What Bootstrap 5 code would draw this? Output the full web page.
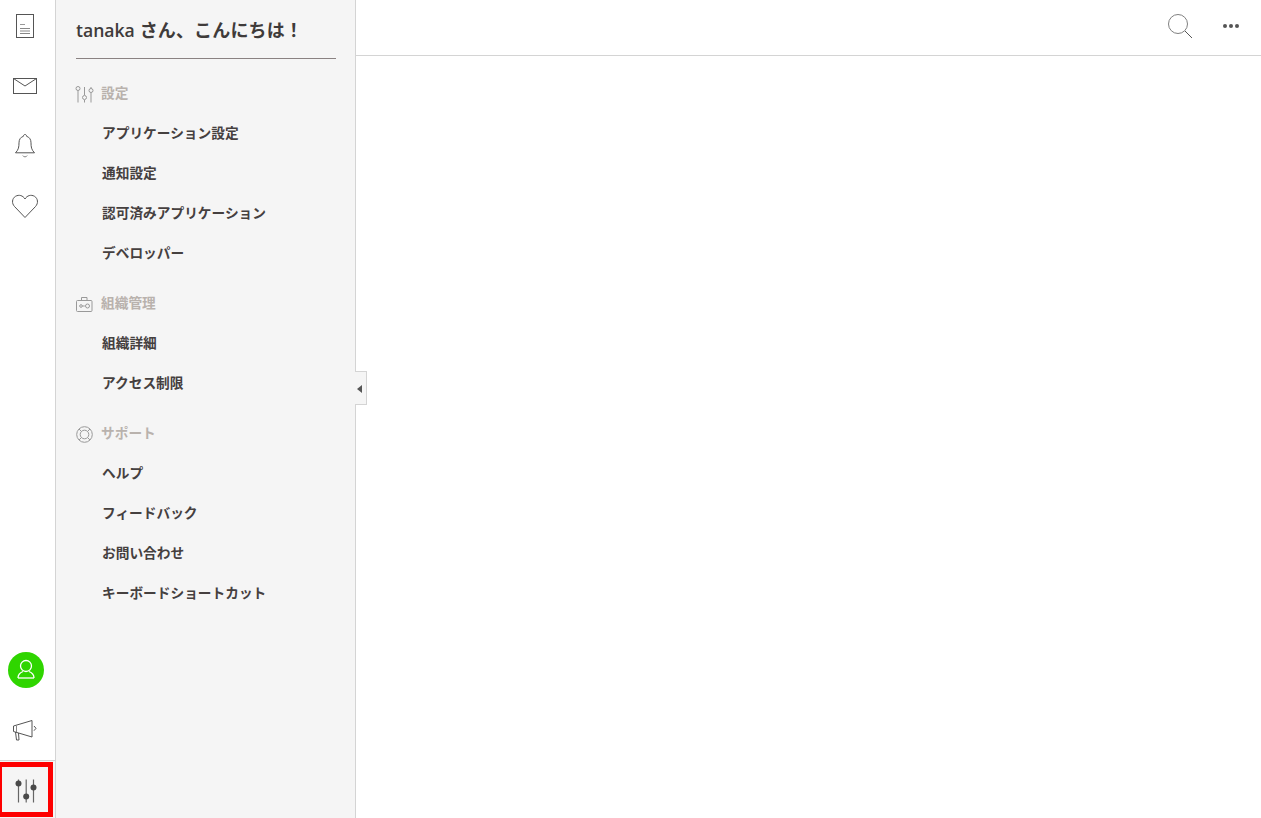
<!doctype html>
<html lang="ja">
<head>
<meta charset="utf-8">
<title>設定</title>
<link href="https://cdn.jsdelivr.net/npm/bootstrap@5.3.0/dist/css/bootstrap.min.css" rel="stylesheet">
<style>
html,body{height:100%;overflow:hidden}
body{font-family:"Open Sans","Noto Sans CJK JP",sans-serif;color:#3f3b3a;background:#fff}
.app-shell{height:818px}
.rail{width:56px;border-right:1px solid #d4d4d4;background:#fff}
.rail-btn{height:60px;width:50px}
.rail-top{margin-top:-4px}
.rail-bottom-item{height:60px;width:52px}
.rail-bottom-item.horn{width:50px;padding-top:2px}
.avatar-disc{width:36px;height:36px;background:#2fd500;border-radius:50%;margin-top:2px}
.settings-cell{height:58px;width:55px;background:#f5f5f5;border-top:1px solid #d4d4d4;margin-top:1px;position:relative}
.settings-mark{position:absolute;left:0;top:1px;width:53px;height:55px;border:5px solid #fe0000;border-left-width:2px;padding-left:2px}
.panel{width:300px;background:#f5f5f5;border-right:1px solid #d4d4d4;position:relative}
.greet{margin:0 19px 0 20px;height:59px;border-bottom:1px solid #8a8282;font-size:18px;font-weight:700;line-height:60px;color:#3f3b3a;letter-spacing:.15px}
.greet-name{font-size:17.6px;font-weight:600;letter-spacing:0}
.sec-head{height:40px;margin-left:19px;font-size:13.7px;font-weight:700;color:#b9b2ad;gap:7px;padding-bottom:2px}
.sec-icon{width:19px;height:19px;flex:none;margin-top:2px}
.menu-link{display:block;height:40px;line-height:38px;padding-left:46px;font-size:13.7px;font-weight:700;color:#45403f;text-decoration:none}
.sec-first{margin-top:15px}
.sec-next{margin-top:10px}
.collapse-tab{position:absolute;right:-12px;top:371px;width:12px;height:34px;background:#f5f5f5;border:1px solid #d4d4d4;border-left:0}
.collapse-tab::after{content:"";position:absolute;left:2px;top:13px;border-style:solid;border-width:4px 5px 4px 0;border-color:transparent #555 transparent transparent}
.topbar{height:56px;border-bottom:1px solid #d4d4d4;padding-right:22px}
.search-glyph{margin-right:30px;margin-top:-3px}
.dots{gap:2px;margin-top:-3px}
.dots span{width:4px;height:4px;background:#555;border-radius:50%}
</style>
</head>
<body>
<div class="app-shell d-flex">
  <nav class="rail d-flex flex-column flex-shrink-0">
    <div class="rail-top">
      <div class="rail-btn d-flex align-items-center justify-content-center">
        <svg width="20" height="26" viewBox="0 0 20 26" fill="none" stroke="#555"><rect x="1.500" y="1.500" width="17" height="23"/><path d="M5 11.500h5" stroke="#999"/><path d="M5 15.500h10M5 18h10M5 20.500h10" stroke="#888"/></svg>
      </div>
      <div class="rail-btn d-flex align-items-center justify-content-center">
        <svg width="26" height="18" viewBox="0 0 26 18" fill="none" stroke="#555"><rect x="1.500" y="1.500" width="23" height="15"/><path d="M1.500 1.500 13 9 24.500 1.500"/></svg>
      </div>
      <div class="rail-btn d-flex align-items-center justify-content-center">
        <svg width="22" height="26" viewBox="0 0 22 26" fill="none" stroke="#555"><path d="M11 1.500c-1 0-1.600.8-1.600 1.800-3 .9-4.400 3.400-4.400 6.500 0 4-.4 7-3.500 10h19c-3.100-3-3.500-6-3.500-10 0-3.100-1.400-5.600-4.400-6.500 0-1-.6-1.800-1.600-1.800z"/><path d="M8.800 22.500c.5 1.800 3.900 1.800 4.400 0" stroke="#888"/></svg>
      </div>
      <div class="rail-btn d-flex align-items-center justify-content-center">
        <svg width="28" height="26" viewBox="0 0 28 26" fill="none" stroke="#555"><path d="M14 24.500 3.500 13.500C.5 10.300 1 5.500 4.500 3.300 8 1.300 12 2.500 14 6c2-3.500 6-4.700 9.500-2.700 3.500 2.200 4 7 1 10.200z"/></svg>
      </div>
    </div>
    <div class="mt-auto">
      <div class="rail-bottom-item d-flex align-items-center justify-content-center">
        <div class="avatar-disc d-flex align-items-center justify-content-center">
          <svg width="22" height="24" viewBox="0 0 22 24" fill="none" stroke="#fff" stroke-width="1.300"><circle cx="11" cy="8" r="5.500"/><path d="M3 20c0-3.500 2.500-5.500 5-6.500M19 20c0-3.500-2.500-5.500-5-6.500"/><path d="M3 20h16"/></svg>
        </div>
      </div>
      <div class="rail-bottom-item horn d-flex align-items-center justify-content-center">
        <svg width="26" height="24" viewBox="0 0 26 24" fill="none" stroke="#555"><path d="M1.500 8 20 2.500V19L1.500 13.500z"/><path d="M3.500 14l1 8H7l-.5-7"/><path d="M22 8l2 2.300-2 2.400"/><path d="M4.500 7.500v6.500" stroke="#888"/></svg>
      </div>
      <div class="settings-cell">
        <div class="settings-mark d-flex align-items-center justify-content-center">
          <svg width="24" height="26" viewBox="0 0 24 26" fill="none" stroke="#666" stroke-width="1.200"><path d="M4.500 2.500v23M12.200 2.500v23M19.500 2.500v23"/><circle cx="4.500" cy="6.500" r="3" fill="#4a4a4a" stroke="none"/><circle cx="12.200" cy="19.500" r="3" fill="#4a4a4a" stroke="none"/><circle cx="19.500" cy="10.500" r="3" fill="#4a4a4a" stroke="none"/></svg>
        </div>
      </div>
    </div>
  </nav>
  <aside class="panel flex-shrink-0">
    <div class="greet"><span class="greet-name">tanaka</span> さん、こんにちは！</div>
    <div class="sec-head sec-first d-flex align-items-center">
      <svg class="sec-icon" viewBox="0 0 19 19" fill="none" stroke="#999"><path d="M3 5.500V17.500M9.500 2v8M9.500 15v2.500M16 2v1.500M16 7.500v10"/><circle cx="3" cy="3.500" r="2"/><circle cx="9.500" cy="12.500" r="2"/><circle cx="16" cy="5.500" r="2"/></svg>
      <span>設定</span>
    </div>
    <a class="menu-link" href="#">アプリケーション設定</a>
    <a class="menu-link" href="#">通知設定</a>
    <a class="menu-link" href="#">認可済みアプリケーション</a>
    <a class="menu-link" href="#">デベロッパー</a>
    <div class="sec-head sec-next d-flex align-items-center">
      <svg class="sec-icon" viewBox="0 0 19 19" fill="none" stroke="#999"><rect x="1.500" y="5.500" width="15.500" height="11" rx="1"/><path d="M6.500 5.500V2.500h5.500v3"/><circle cx="6" cy="11" r="1.300"/><path d="M7.300 11h2.500"/><circle cx="12.500" cy="11" r="2"/></svg>
      <span>組織管理</span>
    </div>
    <a class="menu-link" href="#">組織詳細</a>
    <a class="menu-link" href="#">アクセス制限</a>
    <div class="sec-head sec-next d-flex align-items-center">
      <svg class="sec-icon" viewBox="0 0 19 19" fill="none" stroke="#999"><circle cx="9.500" cy="9.500" r="7.800"/><circle cx="9.500" cy="9.500" r="4.300"/><path d="M4 4 6.500 6.500M15 4 12.500 6.500M4 15 6.500 12.500M15 15 12.500 12.500"/></svg>
      <span>サポート</span>
    </div>
    <a class="menu-link" href="#">ヘルプ</a>
    <a class="menu-link" href="#">フィードバック</a>
    <a class="menu-link" href="#">お問い合わせ</a>
    <a class="menu-link" href="#">キーボードショートカット</a>
    <div class="collapse-tab"></div>
  </aside>
  <main class="flex-grow-1">
    <header class="topbar d-flex align-items-center justify-content-end">
      <svg class="search-glyph" width="26" height="26" viewBox="0 0 26 26" fill="none"><circle cx="11" cy="11" r="9.500" stroke="#808080"/><path d="M18 18l7 7" stroke="#555"/></svg>
      <div class="dots d-flex"><span></span><span></span><span></span></div>
    </header>
  </main>
</div>
<script src="https://cdn.jsdelivr.net/npm/bootstrap@5.3.0/dist/js/bootstrap.bundle.min.js"></script>
</body>
</html>
